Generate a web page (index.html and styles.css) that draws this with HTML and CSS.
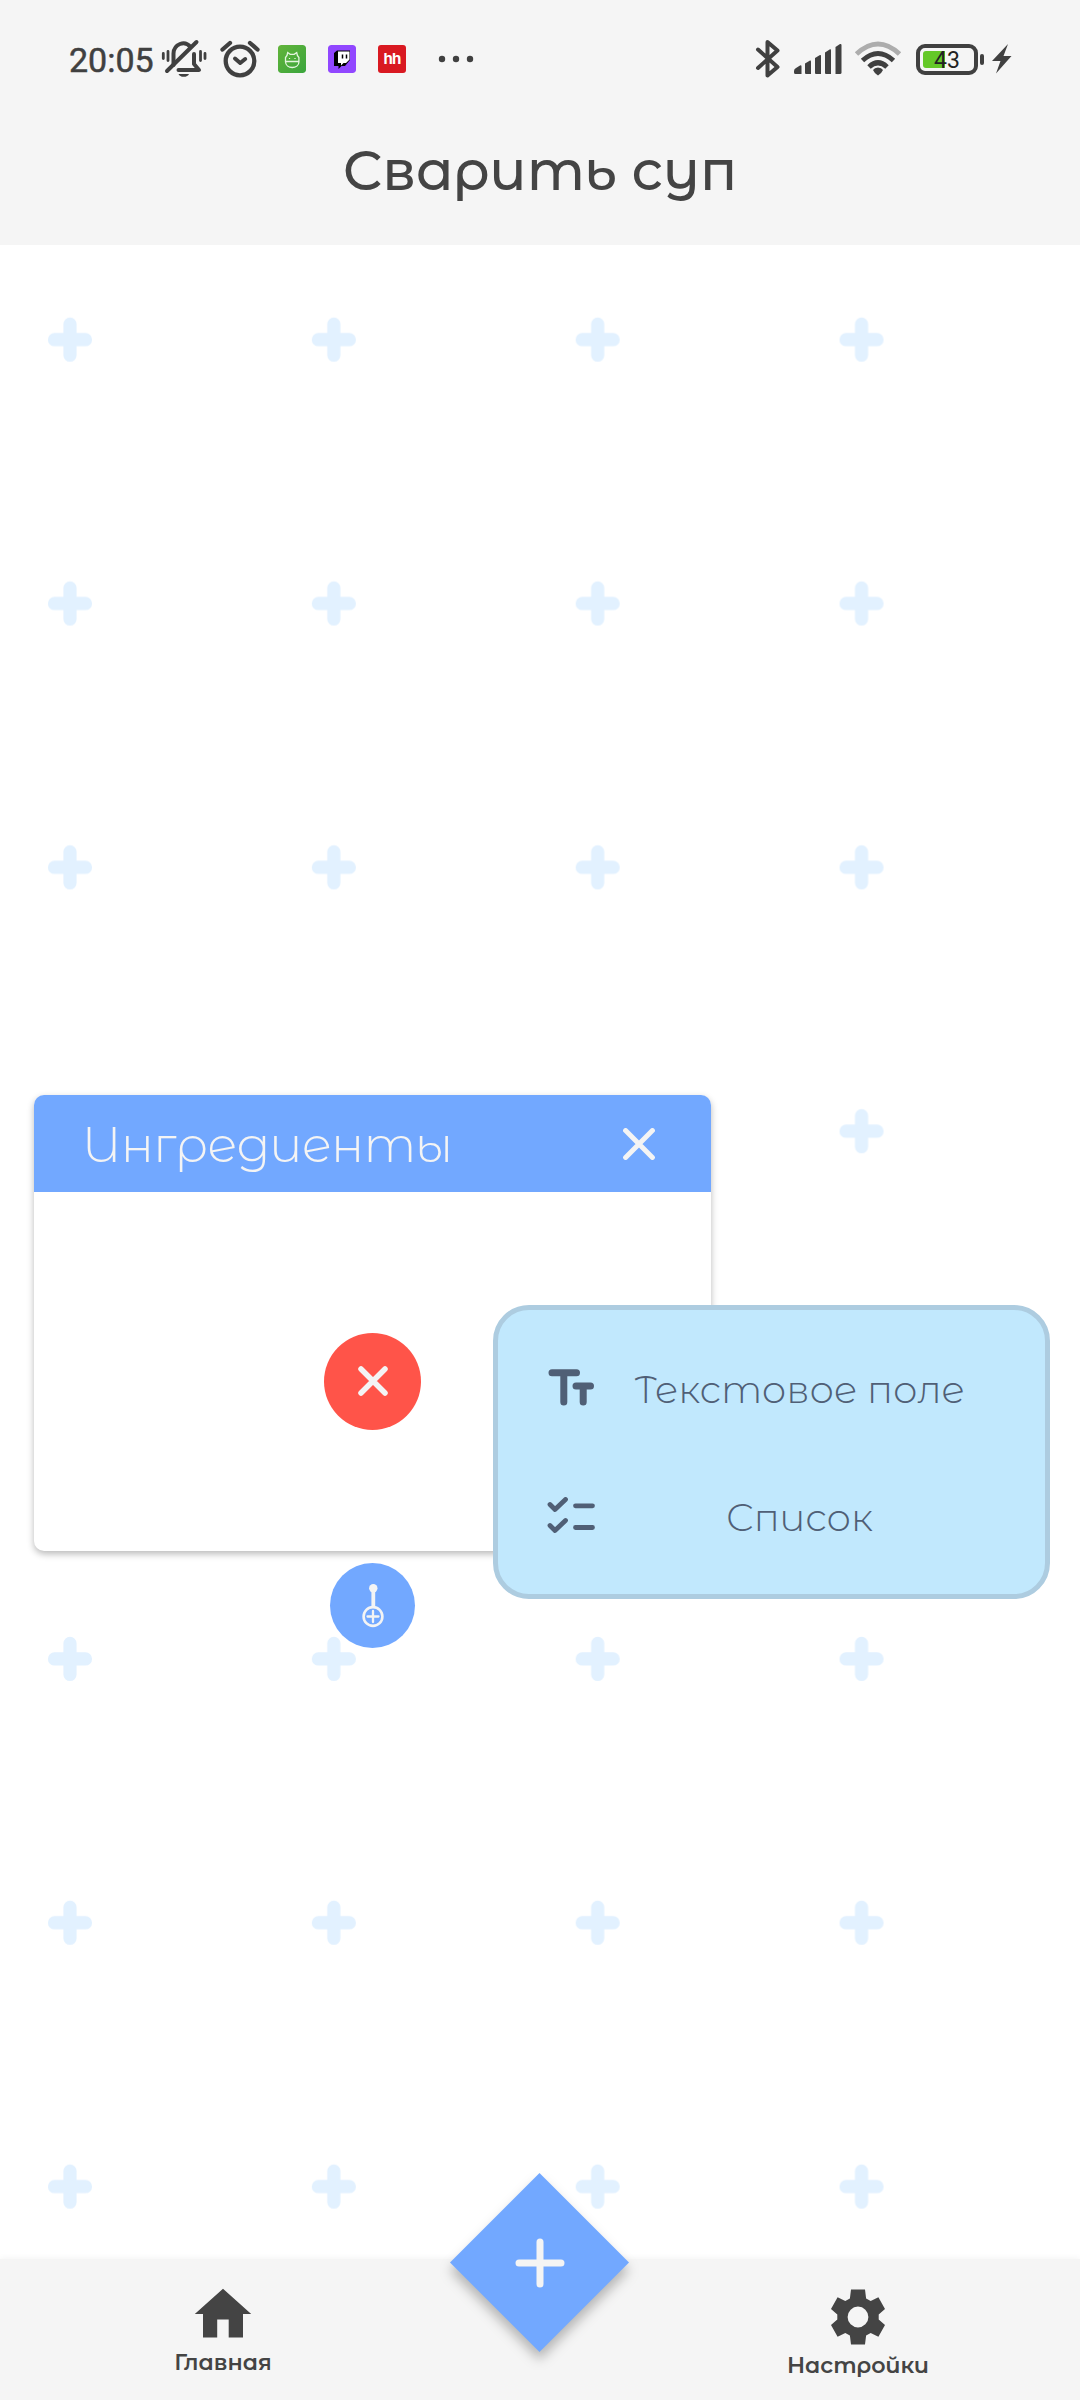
FILE: index.html
```html
<!DOCTYPE html>
<html lang="ru">
<head>
<meta charset="utf-8">
<title>Сварить суп</title>
<link rel="stylesheet" href="styles.css">
</head>
<body>
<div class="screen">
  <header class="header">
    <div class="status">
      <div class="status-left">
        <span class="time">20:05</span>
        <svg class="bell" width="46" height="40" viewBox="0 0 46 40" fill="none" stroke="#404040" stroke-width="4" stroke-linecap="round" stroke-linejoin="round">
          <path d="M12.500 26V14.500A9.700 10.500 0 0 1 29.500 8"/>
          <path d="M33 15v10l5 6H17.500"/>
          <path d="M6 32L35.500 3"/>
          <path d="M2.300 14.500v5M7 12.500v9M39.500 12.500v9M44 14.500v5" stroke-width="2.800"/>
          <path d="M17.500 35h10.500a5.500 4 0 0 1-10.500 0z" fill="#404040" stroke="none"/>
        </svg>
        <svg class="alarm" width="40" height="38" viewBox="0 0 40 38" fill="none" stroke="#404040" stroke-linecap="round" stroke-linejoin="round">
          <circle cx="20" cy="21" r="14.300" stroke-width="4.300"/>
          <path d="M2.500 9.500l7.500-6.500M30 3l7.500 6.500" stroke-width="4.300"/>
          <path d="M15 18.500l5.200 4.500 5-4" stroke-width="4"/>
        </svg>
        <svg class="app" width="28" height="28" viewBox="0 0 28 28">
          <defs><linearGradient id="green" x1="0" y1="0" x2="1" y2="1"><stop offset="0" stop-color="#62b43a"/><stop offset="1" stop-color="#3aa53d"/></linearGradient></defs>
          <rect width="28" height="28" rx="3" fill="url(#green)"/>
          <path d="M7.500 16.500v-4l1.500-2 .7-3 2.500 1.800h4l2.500-1.800.7 3 1.500 2v4zM7.500 16.500c0 8 13.500 8 13.500 0M11.500 13v1M17 13v1" fill="none" stroke="#e4f5df" stroke-width="1.300"/>
        </svg>
        <svg class="app" width="28" height="28" viewBox="0 0 28 28">
          <rect width="28" height="28" rx="3" fill="#9147ff"/>
          <path d="M6 8l3-2.500h13V15l-5 6h-3.500L10.500 24v-3H6z" fill="#000"/>
          <path d="M10 6.500h11.500v8L18 18h-2.500L13 20.500V18h-3z" fill="#fff"/>
          <path d="M14.500 9.500v4M18.500 9.500v4" stroke="#000" stroke-width="1.500"/>
        </svg>
        <span class="hh">hh</span>
        <svg class="dots" width="36" height="8" viewBox="0 0 36 8" fill="#404040"><circle cx="4" cy="4" r="3.200"/><circle cx="18" cy="4" r="3.200"/><circle cx="32" cy="4" r="3.200"/></svg>
      </div>
      <div class="status-right">
        <svg width="26" height="40" viewBox="0 0 26 40" fill="none" stroke="#404040" stroke-width="4" stroke-linecap="round" stroke-linejoin="round"><path d="M3 10.500L22.500 28 12.500 36.500V3L22.500 11.500 3 29"/></svg>
        <svg class="signal" width="48" height="32" viewBox="0 0 48 32" fill="#404040">
          <path d="M0 28q0-2 2-3l4-2.500q1.500-.6 1.500 1V31H1.500Q0 31 0 29.500z"/>
          <path d="M11 20.500l5-3q1-.4 1 1V31h-5q-1 0-1-1z"/><path d="M21 15l5-3q1-.4 1 1V31h-5q-1 0-1-1z"/>
          <path d="M31 9.500l5-3.200q1-.4 1 1V31h-5q-1 0-1-1z"/><path d="M41.500 4l4.500-3q1.500-.4 1.500 1V29.500q0 1.500-1.500 1.500h-4.500z"/>
        </svg>
        <svg class="wifi" width="48" height="36" viewBox="0 0 48 36" fill="none" stroke="#404040" stroke-width="5">
          <path d="M2.500 13Q24-7 45.500 13" stroke="#adadad"/>
          <path d="M8.500 19.500Q24 5.500 39.500 19.500"/>
          <path d="M15 26Q24 17.500 33 26"/>
          <path d="M24 26.500q3.500 0 5 2.500-1.500 3.500-5 5.500-3.500-2-5-5.500 1.500-2.500 5-2.500z" fill="#404040" stroke="none"/>
        </svg>
        <div class="battery"><span class="level">43</span></div>
        <svg class="bolt" width="20" height="30" viewBox="0 0 20 30" fill="#404040"><path d="M16 0L0 17h8.500L4 29.500 19.500 12h-8z"/></svg>
      </div>
    </div>
    <h1 class="title">Сварить суп</h1>
  </header>

  <main class="canvas">
    <svg class="grid" width="1080" height="2014">
      <defs>
        <pattern id="plus" width="263.850" height="263.850" patternUnits="userSpaceOnUse" patternTransform="translate(-61.900 -37.200)">
          <path d="M115.500 131.900h31M131 116.400v31" transform="translate(.9 0)" stroke="#e2f1ff" stroke-width="13.200" stroke-linecap="round"/>
        </pattern>
      </defs>
      <rect width="950" height="2014" fill="url(#plus)"/>
    </svg>

    <section class="card">
      <div class="card-head">
        <h2 class="card-title">Ингредиенты</h2>
        <svg width="32" height="32" viewBox="0 0 32 32" stroke="#f4f4f4" stroke-width="5" stroke-linecap="round"><path d="M2.600 2.600l26.800 26.800M29.400 2.600L2.600 29.400"/></svg>
      </div>
      <div class="card-body">
        <div class="remove">
          <svg width="30" height="30" viewBox="0 0 30 30" stroke="#f4f4f4" stroke-width="5.500" stroke-linecap="round"><path d="M3 3l24 24M27 3L3 27"/></svg>
        </div>
      </div>
    </section>

    <div class="link">
      <svg width="24" height="44" viewBox="0 0 24 44" fill="none" stroke="#f4f4f4" stroke-linecap="round">
        <circle cx="12.300" cy="4.300" r="4.200" fill="#f4f4f4" stroke="none"/>
        <path d="M12.300 6v16" stroke-width="3.800"/>
        <circle cx="12" cy="32.500" r="9.400" stroke-width="2.600"/>
        <path d="M6.500 32.500h11M12 27v11" stroke-width="2.300"/>
      </svg>
    </div>

    <div class="menu">
      <div class="menu-item">
        <svg width="48" height="38" viewBox="0 0 48 38" fill="none" stroke="#505f76" stroke-width="7" stroke-linecap="round"><path d="M5 3.800h24.500M16.800 4.500v28.500M29 17h14.500M36.200 17v16"/></svg>
        <span class="menu-label">Текстовое поле</span>
      </div>
      <div class="menu-item">
        <svg width="48" height="38" viewBox="0 0 48 38" fill="none" stroke="#505f76" stroke-width="4.800" stroke-linecap="round" stroke-linejoin="round"><path d="M3 7.500l5 5L18.500 2.500M3 28.500l5 5L18.500 23.500M28.500 8.800h17M28.500 30.500h17"/></svg>
        <span class="menu-label">Список</span>
      </div>
    </div>
  </main>

  <nav class="nav">
    <div class="tab home">
      <svg width="58" height="50" viewBox="0 0 58 50" fill="#444"><path d="M29 .8L57.200 26H49v23.500H34.700v-18h-11.500v18H9V26H.8z"/></svg>
      <span>Главная</span>
    </div>
    <div class="tab settings">
      <svg width="56" height="56" viewBox="-28 -28 56 56">
        <path fill="#444" fill-rule="evenodd" d="M-7-27.500H7L8.100-18.500 12.700-16 20.400-19.700 27-8 20.700-2.600V2.600L27 8 20.400 19.700 12.700 16 8.100 18.500 7 27.500H-7L-8.100 18.500-12.700 16-20.400 19.700-27 8-20.700 2.600V-2.600L-27-8-20.400-19.700-12.700-16-8.100-18.500zM10.400 0A10.400 10.400 0 1 0-10.400 0 10.400 10.400 0 1 0 10.400 0z"/>
      </svg>
      <span>Настройки</span>
    </div>
    <div class="fab">
      <svg width="50" height="50" viewBox="0 0 50 50" stroke="#f4f4f4" stroke-width="7" stroke-linecap="round"><path d="M4 25h42M25 4v42"/></svg>
    </div>
  </nav>
</div>
</body>
</html>
```
FILE: styles.css
```css
* { box-sizing: border-box; }
body {
  margin: 0;
  background: #fff;
  font-family: "Montserrat Alternates", Montserrat, Lato, sans-serif;
  color: #444;
}
svg { display: block; flex: none; }
h1, h2 { margin: 0; }

.screen {
  display: flex;
  flex-direction: column;
  width: 1080px;
  height: 2400px;
  overflow: hidden;
}

.header { height: 245px; background: #f5f5f5; }
.status {
  display: flex;
  justify-content: space-between;
  align-items: center;
  height: 118px;
  padding: 0 68px 0 69px;
}
.status-left, .status-right { display: flex; align-items: center; }
.time {
  width: 92px;
  font: 400 34px/40px Roboto, sans-serif;
  -webkit-text-stroke: .5px #404040;
  color: #404040;
  padding-top: 2px;
}
.alarm { margin: 0 18px 0 13px; }
.app { margin-right: 22px; }
.app, .hh { border-radius: 3px; }
.hh {
  width: 28px;
  height: 28px;
  background: #d91921;
  color: #fff;
  font: 700 15px/27px Inter, sans-serif;
  letter-spacing: -.8px;
  text-align: center;
}
.dots { margin-left: 32px; }
.signal { margin-left: 13px; }
.wifi { margin-left: 12px; }
.battery {
  position: relative;
  width: 62px;
  height: 31px;
  margin: 0 14px 0 14px;
  padding: 3px;
  border: 4px solid #404040;
  border-radius: 9px;
}
.battery::after {
  content: "";
  position: absolute;
  right: -10px;
  top: 6px;
  width: 4px;
  height: 11px;
  border-radius: 2px;
  background: #404040;
}
.level {
  display: block;
  height: 17px;
  border-radius: 3px;
  background: linear-gradient(90deg, #64c828 22px, transparent 22px);
  font: 400 23px/19px Roboto, sans-serif;
  color: #222;
  text-align: center;
}

.title {
  height: 105px;
  font-size: 55px;
  font-weight: 500;
  line-height: 105px;
  text-align: center;
}

.canvas { position: relative; flex: 1; }
.grid { position: absolute; inset: 0; }

.card {
  position: absolute;
  left: 34px;
  top: 850px;
  width: 677px;
  height: 456px;
  border-radius: 10px;
  background: #fff;
  box-shadow: 0 3px 7px rgba(0, 0, 0, .28);
}
.card-head {
  display: flex;
  align-items: center;
  justify-content: space-between;
  height: 97px;
  padding: 0 56px 0 48px;
  border-radius: 10px 10px 0 0;
  background: #72a8ff;
}
.card-title {
  font-size: 49.500px;
  font-weight: 300;
  letter-spacing: -.6px;
  color: #f4f4f4;
}
.card-body {
  display: flex;
  justify-content: center;
  height: 359px;
  padding-top: 140.500px;
}
.remove, .link {
  display: flex;
  align-items: center;
  justify-content: center;
  border-radius: 50%;
}
.remove { width: 97px; height: 97px; background: #ff5449; }
.link {
  position: absolute;
  left: 330px;
  top: 1318px;
  width: 85px;
  height: 85px;
  background: #72a8ff;
}

.menu {
  position: absolute;
  left: 493px;
  top: 1060px;
  width: 557px;
  height: 294px;
  padding: 14px 76px 14px 49px;
  border: 5.500px solid #adcce0;
  border-radius: 36px;
  background: #c1e8fd;
}
.menu-item { display: flex; align-items: center; height: 128px; }
.menu-label {
  flex: 1;
  font-size: 38.700px;
  font-weight: 300;
  line-height: 48px;
  text-align: center;
  padding: 3px 0 0 35px;
  white-space: nowrap;
  color: #505f76;
}

.nav {
  position: relative;
  display: flex;
  justify-content: space-between;
  height: 141px;
  padding: 0 142px 0 143px;
  background: #f5f5f5;
  box-shadow: 0 0 7px rgba(0, 0, 0, .06);
}
.tab {
  display: flex;
  flex-direction: column;
  align-items: center;
  width: 160px;
  font-size: 22.200px;
  font-weight: 600;
  line-height: 28px;
}
.home { padding-top: 29px; gap: 11px; }
.settings { padding-top: 30px; gap: 7px; }
.fab {
  position: absolute;
  left: 450px;
  top: -86px;
  display: flex;
  align-items: center;
  justify-content: center;
  width: 179px;
  height: 179px;
  filter: drop-shadow(0 8px 6px rgba(0, 0, 0, .26));
}
.fab::before {
  content: "";
  position: absolute;
  inset: 0;
  background: #72a8ff;
  clip-path: polygon(50% 0, 100% 50%, 50% 100%, 0 50%);
}
.fab svg { position: relative; }
```
